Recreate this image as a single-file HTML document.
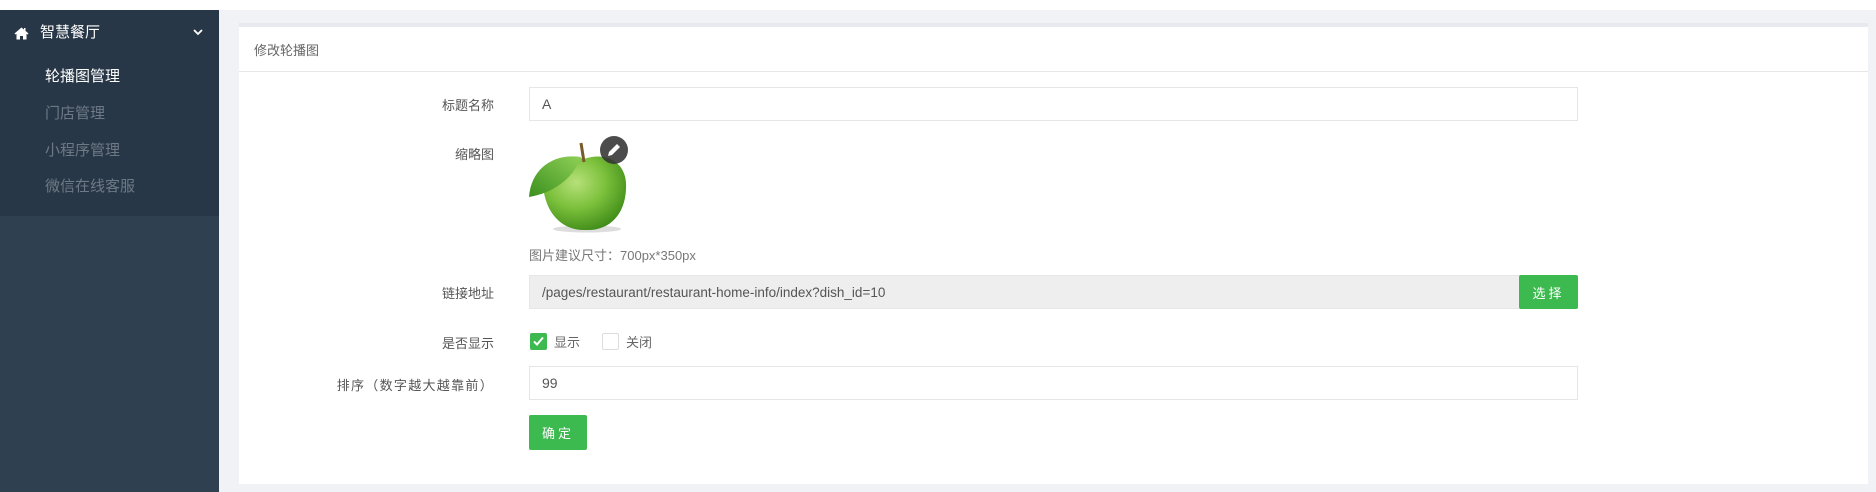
<!DOCTYPE html>
<html><head><meta charset="utf-8"><style>
*{margin:0;padding:0;box-sizing:border-box}
body{width:1876px;height:492px;overflow:hidden;background:#f0f2f6;font-family:"Liberation Sans","Noto Sans CJK SC",sans-serif;position:relative}
.top{position:absolute;left:0;top:0;width:1876px;height:10px;background:#fff}
.side{position:absolute;left:0;top:10px;width:219px;height:482px;background:#2f4050}
.sidetop{position:absolute;left:0;top:0;width:219px;height:206px;background:#283747}
.sh{position:absolute;left:40px;top:13px;font-size:15px;color:#fff;line-height:20px}
.item{position:absolute;left:45px;font-size:15px;color:#6d7985;line-height:20px}
.panel{position:absolute;left:239px;top:23px;width:1629px;height:461px;background:#fff;border-top:4px solid #e7e9ee}
.ph{position:absolute;left:15px;top:13px;font-size:13px;color:#666}
.phl{position:absolute;left:0;top:44px;width:100%;height:1px;background:#e7e7e7}
.lbl{position:absolute;right:1374px;font-size:13px;color:#555;text-align:right;white-space:nowrap}
.inp{position:absolute;left:290px;width:1049px;border:1px solid #e5e6e7;font-size:14px;color:#555;padding-left:12px;display:flex;align-items:center;background:#fff}
.btn{position:absolute;background:#3cb94f;color:#fff;font-size:13px;display:flex;align-items:center;justify-content:center;letter-spacing:3px;border-radius:2px}
.cb{position:absolute;width:17px;height:17px;border:1px solid #ddd;border-radius:2px;background:#fff}
</style></head><body>
<div class="top"></div>
<div class="side"><div class="sidetop">
<svg style="position:absolute;left:14px;top:17px" width="15" height="13" viewBox="0 0 15 13"><path d="M7.5 0.5L0.5 6.5L1.5 7.5L2.5 6.7V12.5H6V9H9V12.5H12.5V6.7L13.5 7.5L14.5 6.5L11.5 3.9V1H10V2.6Z" fill="#fff"/></svg>
<div class="sh">智慧餐厅</div>
<svg style="position:absolute;left:193px;top:19px" width="10" height="7" viewBox="0 0 10 7"><path d="M1 1L5 5L9 1" stroke="#fff" stroke-width="1.8" fill="none"/></svg>
<div class="item" style="top:57px;color:#fff">轮播图管理</div>
<div class="item" style="top:94px">门店管理</div>
<div class="item" style="top:131px">小程序管理</div>
<div class="item" style="top:167px">微信在线客服</div>
</div></div>
<div class="panel">
<div class="ph">修改轮播图</div><div class="phl"></div>
<div class="lbl" style="top:68px">标题名称</div>
<div class="inp" style="top:60px;height:34px">A</div>
<div class="lbl" style="top:117px">缩略图</div>
<svg style="position:absolute;left:290px;top:108px" width="100" height="98" viewBox="0 0 100 98">
<defs><radialGradient id="g" cx="0.4" cy="0.35" r="0.7"><stop offset="0" stop-color="#b7e07a"/><stop offset="0.5" stop-color="#7cc13c"/><stop offset="1" stop-color="#3e8a18"/></radialGradient>
<linearGradient id="l" x1="0" y1="1" x2="1" y2="0"><stop offset="0" stop-color="#3b8f1e"/><stop offset="1" stop-color="#8fd057"/></linearGradient></defs>
<ellipse cx="58" cy="94" rx="34" ry="3.5" fill="#ddd"/>
<path d="M14 50C12 26 32 17 55 24C78 16 99 28 97 54C96 80 80 96 57 95C33 96 16 78 14 50Z" fill="url(#g)"/>
<path d="M55 27L52 8" stroke="#7a5a2a" stroke-width="3"/>
<path d="M0 62C2 34 24 18 52 22C44 44 24 58 0 62Z" fill="url(#l)"/>
<circle cx="85" cy="15" r="14" fill="#333" opacity="0.88"/>
<path d="M79 21L80 17L88 9L91 12L83 20Z" fill="#fff"/>
</svg>
<div style="position:absolute;left:290px;top:218px;font-size:13px;color:#777">图片建议尺寸：700px*350px</div>
<div class="lbl" style="top:256px">链接地址</div>
<div class="inp" style="top:248px;height:34px;width:991px;background:#eee;font-size:13.5px">/pages/restaurant/restaurant-home-info/index?dish_id=10</div>
<div class="btn" style="left:1280px;top:248px;width:59px;height:34px">选择</div>
<div class="lbl" style="top:306px">是否显示</div>
<div class="cb" style="left:291px;top:306px;background:#3cb94f;border-color:#3cb94f"><svg width="15" height="15" viewBox="0 0 15 15"><path d="M3 7.5L6 10.5L12 3.5" stroke="#fff" stroke-width="2" fill="none"/></svg></div>
<div style="position:absolute;left:315px;top:305px;font-size:13px;color:#666">显示</div>
<div class="cb" style="left:363px;top:306px"></div>
<div style="position:absolute;left:387px;top:305px;font-size:13px;color:#666">关闭</div>
<div class="lbl" style="top:348px;letter-spacing:1.3px">排序（数字越大越靠前）</div>
<div class="inp" style="top:339px;height:34px">99</div>
<div class="btn" style="left:290px;top:388px;width:58px;height:35px">确定</div>
</div>
</body></html>
